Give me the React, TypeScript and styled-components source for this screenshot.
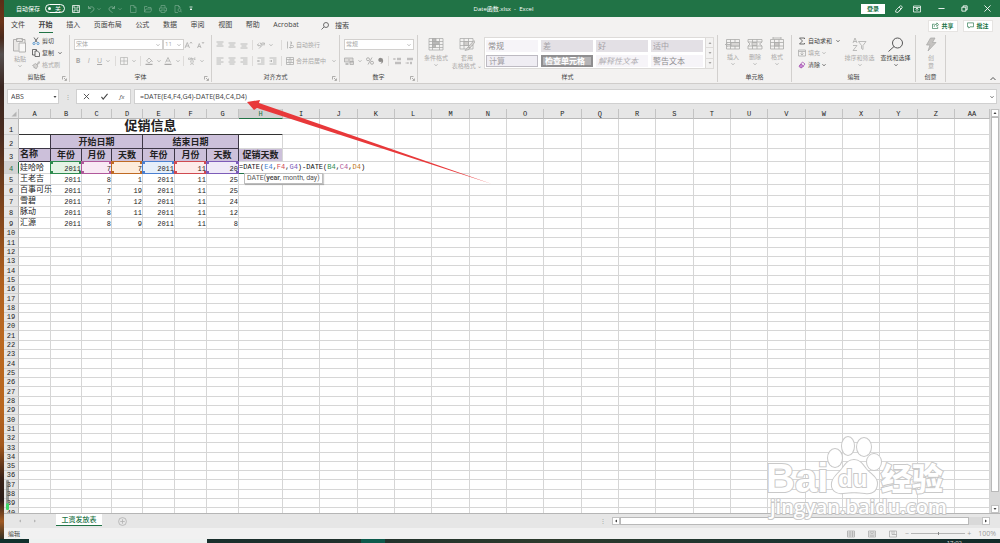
import React from "react";
import styled, { createGlobalStyle, css } from "styled-components";

const ui = `"Open Sans", "Noto Sans CJK SC", sans-serif`;
const mono = `"Liberation Mono", "Noto Sans CJK SC", monospace`;
const c = {
  green: "#217346",
  ribbon: "#f3f2f1",
  frame: "#e6e6e6",
  line: "#d6d6d6",
  text: "#444444",
  off: "#aaa9a8",
  violet: "#ccc0da",
};

const GlobalStyle = createGlobalStyle`
  *, *::before, *::after { box-sizing: border-box; }
  body { margin: 0; font-family: ${ui}; font-size: 6px; line-height: 8px; color: ${c.text}; background: #2b1a12; }
  button, input, select { font: inherit; color: inherit; margin: 0; padding: 0; border: 0; background: none; border-radius: 0; }
  button { display: inline-flex; align-items: center; justify-content: center; white-space: nowrap; }
  select { appearance: none; }
  svg { display: block; flex: none; }
`;

/* ---------- page frame ---------- */
const Desktop = styled.div`
  min-height: 100vh;
  display: flex;
  flex-direction: column;
  overflow: hidden;
  background: linear-gradient(#5b2f18 0, #6b3418 4%, #4a2a1c 7%, #55504f 10%, #3a2620 16%, #4a2c20 25%, #6d3c1c 33%, #8a4a1c 42%, #b0611f 52%, #bb6a22 62%, #b8661f 75%, #a3581d 82%, #3a2218 88%, #2c1c18 92%, #a05a24 96%, #1c2725 100%);
`;
const Win = styled.div`
  margin-left: 4px;
  flex: 1;
  display: flex;
  flex-direction: column;
  background: ${c.frame};
`;

/* ---------- title bar ---------- */
const TitleBar = styled.header`
  height: 17px;
  display: grid;
  grid-template-columns: 1fr auto 1fr;
  align-items: center;
  padding: 0 9px 0 12px;
  background: ${c.green};
  color: #fff;
`;
const DocTitle = styled.h1`
  margin: 0;
  font-size: 6px;
  font-weight: 400;
`;
const Quick = styled.div`
  display: flex;
  align-items: center;
  gap: 7px;
`;
const AutoSave = styled.label`
  display: flex;
  align-items: center;
  gap: 5px;
`;
const Toggle = styled.span`
  position: relative;
  display: flex;
  align-items: center;
  justify-content: flex-end;
  width: 20px;
  height: 9px;
  padding-right: 3px;
  border: 1px solid #fff;
  border-radius: 5px;
  input { position: absolute; inset: 0; width: 100%; height: 100%; opacity: 0; }
  &::before { content: ""; position: absolute; left: 2px; top: 2px; width: 3px; height: 3px; border-radius: 50%; background: #fff; }
`;
const QuickButton = styled.button<{ $dim?: boolean }>`
  gap: 2px;
  color: #fff;
  opacity: ${(p) => (p.$dim ? 0.35 : 1)};
`;
const WindowTools = styled.div`
  display: flex;
  justify-content: flex-end;
  align-items: center;
  gap: 17px;
`;
const ToolSet = styled.div<{ $gap: number }>`
  display: flex;
  align-items: center;
  gap: ${(p) => p.$gap}px;
  color: #fff;
`;
const Login = styled.button`
  width: 24px;
  height: 10px;
  background: #fff;
  color: ${c.green};
  font-weight: 600;
`;

/* ---------- ribbon tabs ---------- */
const TabRow = styled.nav`
  height: 17px;
  display: flex;
  align-items: center;
  padding: 0 7px;
  background: ${c.ribbon};
  font-size: 7px;
`;
const TabList = styled.div`
  width: 288px;
  display: flex;
  justify-content: space-between;
`;
const Tab = styled.button<{ $on?: boolean }>`
  height: 15px;
  border-bottom: 1px solid ${(p) => (p.$on ? c.green : "transparent")};
  font-weight: ${(p) => (p.$on ? 700 : 400)};
`;
const Search = styled.button`
  margin: 0 auto 0 22px;
  gap: 6px;
`;
const ShareButton = styled.button`
  width: 30px;
  height: 12px;
  margin-left: 5px;
  gap: 2px;
  background: #fff;
  border: 1px solid #e6e4e2;
  color: ${c.green};
  font-size: 6px;
  font-weight: 600;
`;

/* ---------- ribbon ---------- */
const Ribbon = styled.section`
  height: 50px;
  display: flex;
  padding: 1px 0 1px;
  background: ${c.ribbon};
  border-bottom: 1px solid #cfcdcb;
`;
const Group = styled.section<{ $w: number }>`
  position: relative;
  width: ${(p) => p.$w}px;
  display: flex;
  flex-direction: column;
  border-right: 1px solid #d2d0ce;
`;
const GroupBody = styled.div<{ $gap?: number; $pad?: number }>`
  flex: 1;
  display: flex;
  align-items: flex-start;
  gap: ${(p) => p.$gap ?? 4}px;
  padding-left: ${(p) => p.$pad ?? 4}px;
`;
const GroupLabel = styled.h2`
  margin: 0;
  height: 10px;
  text-align: center;
  font-size: 6px;
  line-height: 10px;
  font-weight: 400;
`;
const Launcher = styled.button`
  position: absolute;
  right: 2px;
  bottom: 1px;
  color: #8a8886;
`;
const BigButton = styled.button<{ $off?: boolean; $w?: number }>`
  flex-direction: column;
  justify-content: flex-start;
  width: ${(p) => p.$w ?? 22}px;
  padding-top: 2px;
  gap: 1px;
  line-height: 7px;
  color: ${(p) => (p.$off ? c.off : c.text)};
  svg + span { padding-top: 2px; }
`;
const SmallStack = styled.div`
  display: flex;
  flex-direction: column;
  align-items: flex-start;
`;
const SmallButton = styled.button<{ $off?: boolean }>`
  height: 12px;
  gap: 2px;
  color: ${(p) => (p.$off ? c.off : c.text)};
`;
const Rows = styled.div`
  display: flex;
  flex-direction: column;
  gap: 5px;
  padding-top: 4px;
`;
const Row = styled.div<{ $gap?: number }>`
  height: 11px;
  display: flex;
  align-items: center;
  gap: ${(p) => p.$gap ?? 4}px;
  color: ${c.off};
`;
const Rule = styled.span`
  width: 1px;
  height: 10px;
  background: #dddbd9;
`;
const Tool = styled.button<{ $w?: number }>`
  width: ${(p) => (p.$w ? `${p.$w}px` : "auto")};
  gap: 4px;
  justify-content: flex-start;
  font-size: 7px;
`;
const LabelTool = styled.button`
  gap: 2px;
  svg:last-child:not(:first-child) { margin-left: 4px; }
`;
const Picker = styled.span<{ $w: number }>`
  position: relative;
  width: ${(p) => p.$w}px;
  height: 11px;
  border: 1px solid #d2d0ce;
  background: #fff;
  select { display: block; width: 100%; height: 9px; padding-left: 1px; line-height: 9px; }
  svg { position: absolute; right: 2px; top: 3px; pointer-events: none; }
`;
const Gallery = styled.div`
  display: flex;
  height: 32px;
  margin-top: 2px;
  border: 1px solid #dddbd9;
  background: #fff;
`;
const Swatches = styled.div`
  display: grid;
  grid-template-columns: repeat(4, 52px);
  grid-auto-rows: 12px;
  gap: 3px;
  padding: 2px 2px 0 1px;
`;
const Swatch = styled.button<{ $kind: "plain" | "tint" | "calc" | "check" | "note" }>`
  justify-content: flex-start;
  padding-left: 2px;
  font-size: 8px;
  line-height: 10px;
  color: #8f8d90;
  background: #f6f4f8;
  ${(p) => p.$kind === "tint" && css`background: #e3e0e5; color: #a5a2a7;`}
  ${(p) => p.$kind === "calc" && css`background: #efedf3; border: 1px solid #bdbac2; color: #a5a2a7;`}
  ${(p) => p.$kind === "check" && css`background: #b5b4b6; border: 2px double #8f8e90; color: #fff; font-weight: 700;`}
  ${(p) => p.$kind === "note" && css`font-style: italic; color: #b0adb2;`}
`;
const GalleryNav = styled.div`
  display: flex;
  flex-direction: column;
  width: 8px;
  border-left: 1px solid #dddbd9;
  color: #a5a3a1;
  background: ${c.ribbon};
  button { flex: 1; }
  button + button { border-top: 1px solid #dddbd9; }
`;
const Collapse = styled.button`
  margin: auto 4px 1px auto;
`;

/* ---------- formula bar ---------- */
const FormulaBar = styled.div`
  height: 25px;
  display: flex;
  align-items: center;
  padding: 0 3px 0 3px;
`;
const NameBox = styled.label`
  width: 52px;
  height: 15px;
  display: flex;
  align-items: center;
  padding: 0 3px;
  background: #fff;
  border: 1px solid #d0d0d0;
  input { width: 42px; font-size: 7px; }
`;
const Grip = styled.span`
  width: 17px;
  text-align: center;
  color: #9a9a9a;
`;
const EditButtons = styled.div`
  width: 55px;
  height: 15px;
  display: flex;
  align-items: center;
  justify-content: space-around;
  background: #fff;
  border: 1px solid #d0d0d0;
`;
const FormulaField = styled.label`
  flex: 1;
  height: 15px;
  margin-left: 3px;
  display: flex;
  align-items: center;
  padding: 0 2px 0 5px;
  background: #fff;
  border: 1px solid #d0d0d0;
  input { flex: 1; font-size: 7px; }
`;

/* ---------- sheet ---------- */
const SheetArea = styled.main`
  position: relative;
  flex: 1 0 404px;
  height: 404px;
  display: flex;
`;
const SheetView = styled.div`
  flex: 1;
  height: 404px;
  overflow: hidden;
  background: #fff;
`;
const Grid = styled.table`
  width: 100%;
  height: 409px;
  table-layout: fixed;
  border-collapse: separate;
  border-spacing: 0;
  font-family: ${mono};
  font-size: 7px;
  line-height: 8px;
  color: #222;
  th, td { padding: 0; border: 0 solid ${c.line}; border-width: 0 1px 1px 0; }
`;
const ColHead = styled.th<{ $on?: boolean }>`
  height: 10px;
  background: ${(p) => (p.$on ? "#d2d2d2" : c.frame)};
  color: ${(p) => (p.$on ? c.green : "#222")};
  font-weight: 400;
  && { border-color: #c3c3c3; border-bottom-color: ${(p) => (p.$on ? c.green : "#b8b8b8")}; }
  svg { margin-left: auto; margin-right: 1px; }
`;
const RowHead = styled.th<{ $on?: boolean }>`
  background: ${(p) => (p.$on ? "#d2d2d2" : c.frame)};
  color: ${(p) => (p.$on ? c.green : "#222")};
  font-weight: 400;
  vertical-align: bottom;
  && { border-bottom-color: #cfcfcf; border-right-color: ${(p) => (p.$on ? c.green : "#b8b8b8")}; }
`;
const Line = styled.tr<{ $h?: number }>`
  ${(p) => p.$h && css`height: ${p.$h}px;`}
`;
const Caption = styled.td`
  text-align: center;
  font-size: 13px;
  line-height: 15px;
  font-weight: 700;
  && { border-bottom-color: #333; border-right-color: #fff; }
`;
const Head = styled.td<{ $left?: boolean; $open?: boolean; $blank?: boolean }>`
  background: ${(p) => (p.$blank ? "#fff" : c.violet)};
  text-align: ${(p) => (p.$left ? "left" : "center")};
  vertical-align: ${(p) => (p.$left ? "middle" : "bottom")};
  font-size: 9px;
  line-height: 10px;
  font-weight: 700;
  && { border-color: ${(p) => (p.$open ? c.line : "#3c3645")}; ${(p) => p.$left && "padding-left: 1px;"} }
`;
const Name = styled.td`
  font-size: 8px;
  line-height: 10px;
  white-space: nowrap;
  && { padding-left: 1px; }
`;
const Num = styled.td<{ $ref?: [string, string] }>`
  position: relative;
  text-align: right;
  vertical-align: bottom;
  ${(p) =>
    p.$ref &&
    css`
      background: ${p.$ref[1]};
      &::after {
        content: "";
        position: absolute;
        inset: -1px -1px -1px -1px;
        border: 1px solid ${p.$ref[0]};
        background:
          linear-gradient(${p.$ref[0]}, ${p.$ref[0]}) 0 0 / 2px 2px no-repeat,
          linear-gradient(${p.$ref[0]}, ${p.$ref[0]}) 100% 0 / 2px 2px no-repeat,
          linear-gradient(${p.$ref[0]}, ${p.$ref[0]}) 0 100% / 2px 2px no-repeat,
          linear-gradient(${p.$ref[0]}, ${p.$ref[0]}) 100% 100% / 2px 2px no-repeat;
      }
    `}
`;
const EditCell = styled.td`
  position: relative;
  && { border-bottom-color: ${c.green}; }
`;
const Editing = styled.div`
  position: absolute;
  left: 0;
  top: 0;
  z-index: 1;
  line-height: 11px;
  background: #fff;
  white-space: nowrap;
  color: #111;
`;
const Token = styled.span<{ $c: string }>`
  color: ${(p) => p.$c};
`;
const Hint = styled.div`
  position: absolute;
  left: 5px;
  top: 11px;
  z-index: 2;
  height: 11px;
  padding: 0 2px;
  border: 1px solid #bdbdbd;
  background: #fff;
  box-shadow: 1px 1px 1px #0003;
  font-family: Roboto, sans-serif;
  line-height: 9px;
  white-space: nowrap;
  color: #555;
`;
const Arrow = styled.svg`
  position: absolute;
  left: 242px;
  top: -10px;
  z-index: 3;
  pointer-events: none;
`;
const Gadget = styled.i`
  position: absolute;
  left: 2px;
  top: 371px;
  width: 3px;
  height: 30px;
  background: linear-gradient(#5558 0 23px, #3fd868 24px);
  border-radius: 1px;
`;
const Watermark = styled.svg`
  position: absolute;
  right: 51px;
  bottom: -10px;
  z-index: 3;
  pointer-events: none;
  overflow: visible;
  text, path, ellipse { paint-order: stroke; }
`;

/* ---------- scroll bars ---------- */
const VScroll = styled.div`
  width: 10px;
  display: flex;
  flex-direction: column;
  padding: 0 1px;
  background: #d9d9d9;
`;
const HScroll = styled.div`
  flex: 0 0 38%;
  height: 8px;
  display: flex;
  margin: 3px 10px 0 0;
  background: #d9d9d9;
`;
const ScrollButton = styled.button`
  width: 8px;
  height: 8px;
  background: #fff;
  border: 1px solid #c2c2c2;
`;
const Thumb = styled.div`
  flex: 1;
  background: #fff;
  border: 1px solid #b9b9b9;
`;
const Track = styled.div`
  flex: 0 0 13px;
`;

/* ---------- bottom ---------- */
const SheetTabs = styled.div`
  height: 15px;
  display: flex;
  border-top: 1px solid #b5b5b5;
`;
const SheetNav = styled.div`
  width: 52px;
  display: flex;
  gap: 11px;
  padding-left: 14px;
  color: #b5b5b5;
`;
const SheetTab = styled.button`
  width: 46px;
  height: 12px;
  background: #fff;
  border-bottom: 1px solid ${c.green};
  color: ${c.green};
  font-size: 7px;
  font-weight: 500;
`;
const AddSheet = styled.button`
  margin: 0 auto 0 16px;
  color: #b0b0b0;
`;
const TabGrip = styled(Grip)`
  align-self: center;
`;
const StatusBar = styled.footer`
  height: 11px;
  display: flex;
  align-items: center;
  padding: 0 4px;
  background: #f1f1f1;
`;
const ViewButtons = styled.div`
  margin-left: auto;
  display: flex;
  gap: 13px;
  color: #a8a8a8;
`;
const Zoom = styled.label`
  display: flex;
  align-items: center;
  gap: 2px;
  margin-left: 8px;
  color: #9b9b9b;
  font-size: 7px;
  input {
    appearance: none;
    width: 54px;
    height: 5px;
    background: linear-gradient(#b5b5b5, #b5b5b5) 0 2px / 100% 1px no-repeat;
  }
  input::-webkit-slider-thumb { appearance: none; width: 1px; height: 3px; background: #888; }
  output { margin-left: 5px; }
`;
const TaskBar = styled.div`
  height: 4px;
  display: flex;
  overflow: hidden;
  background: linear-gradient(90deg, #10302c 29px, #1d2f2c 30%, #2c3a2c 55%, #1a3330 80%, #122a28);
`;
const TaskItem = styled.i<{ $at: number; $w: number; $bg: string }>`
  margin-left: ${(p) => p.$at}px;
  width: ${(p) => p.$w}px;
  background: ${(p) => p.$bg};
`;
const Clock = styled.time`
  margin: 0 38px 0 auto;
  color: #ddd;
`;

/* ---------- icons ---------- */
type IconProps = { w?: number; h?: number; box?: string; sw?: number; children: React.ReactNode };
const Icon = ({ w = 8, h = 8, box = "0 0 16 16", sw = 1.5, children }: IconProps) => (
  <svg width={w} height={h} viewBox={box} fill="none" stroke="currentColor" strokeWidth={sw} aria-hidden="true">
    {children}
  </svg>
);
const Chev = () => (
  <Icon w={4} h={4} box="0 0 8 8" sw={1.6}><path d="M1 2.5l3 3 3-3" /></Icon>
);
const Tri = ({ dir }: { dir: "up" | "down" | "left" | "right" }) => {
  const d = { up: "M1 6h6L4 2z", down: "M1 2h6L4 6z", left: "M6 1v6L2 4z", right: "M2 1v6l4-3z" }[dir];
  return <Icon w={4} h={4} box="0 0 8 8"><path d={d} fill="currentColor" stroke="none" /></Icon>;
};
const Bars = ({ rows }: { rows: [number, number, number][] }) => (
  <Icon>{rows.map(([x, y, l], i) => <path key={i} d={`M${x} ${y}h${l}`} />)}</Icon>
);
const Indent = ({ flip }: { flip?: boolean }) => (
  <Icon>
    <path d="M1 2h14M8 6h7M8 10h7M1 14h14" />
    <path d={flip ? "M1 8h5M4 6l2 2-2 2" : "M6 8H1M3 6L1 8l2 2"} />
  </Icon>
);
const CellsIcon = ({ kind }: { kind: "insert" | "delete" | "format" }) => (
  <Icon w={16} h={14} box="0 0 32 28" sw={1.6}>
    {kind === "format" && <path d="M8 2h16M8 0v4M24 0v4" />}
    <path d={kind === "delete" ? "M2 5h28v5l-5 4 5 4v6H2v-6l4-4-4-4zM11 5v5M20 5v5M11 18v6M20 18v6M2 10h28M2 18h28" : "M3 5h26v19H3zM3 11h26M3 18h26M11 5v19M20 5v19"} />
    {kind === "insert" && <path d="M1 15h10M5 11l-4 4 4 4M12 11h17v7H12z" fill="#d8d6d4" />}
    {kind === "delete" && <path d="M10 11h10v6H10z" fill="#d8d6d4" />}
    {kind === "format" && <path d="M11 11h9v7h-9z" fill="#c8c6c4" />}
  </Icon>
);
const Corner = () => (
  <Icon w={5} h={5} box="0 0 10 10" sw={1.3}><path d="M1 7V1h6M4 4l4 4M9 5v4H5" /></Icon>
);

/* ---------- data ---------- */
const tabs = ["文件", "开始", "插入", "页面布局", "公式", "数据", "审阅", "视图", "帮助", "Acrobat"];
const letters = [..."ABCDEFGHIJKLMNOPQRSTUVWXYZ", "AA"];
const fixedCols = [15, 32, 31, 30, 31, 32, 32, 32, 44];
const people: [string, ...number[]][] = [
  ["娃哈哈", 2011, 7, 7, 2011, 11, 20],
  ["王老吉", 2011, 8, 1, 2011, 11, 25],
  ["百事可乐", 2011, 7, 19, 2011, 11, 25],
  ["雪碧", 2011, 7, 12, 2011, 11, 24],
  ["脉动", 2011, 8, 11, 2011, 11, 12],
  ["汇源", 2011, 8, 9, 2011, 11, 8],
];
const refs: [string, string][] = [
  ["#2e8b4f", "#e4f3e6"],
  ["#b0589b", "#f8e9f4"],
  ["#bf6a24", "#fdecdc"],
  ["#4a7fd0", "#e6effa"],
  ["#cf4a50", "#fdebea"],
  ["#7d5cb8", "#efeaf8"],
];
const swatches: [string, "plain" | "tint" | "calc" | "check" | "note"][] = [
  ["常规", "plain"], ["差", "tint"], ["好", "tint"], ["适中", "tint"],
  ["计算", "calc"], ["检查单元格", "check"], ["解释性文本", "note"], ["警告文本", "plain"],
];
const formula = "=DATE(E4,F4,G4)-DATE(B4,C4,D4)";
const tokenColor: Record<string, string> = { E4: "#4a7fd0", F4: "#cf4a50", G4: "#7d5cb8", B4: "#2e8b4f", C4: "#b0589b", D4: "#bf7a24" };
const Blanks = ({ n }: { n: number }) => <>{Array.from({ length: n }, (_, i) => <td key={i} />)}</>;

function Header() {
  return (
    <TitleBar>
      <Quick>
        <AutoSave>自动保存<Toggle><input type="checkbox" aria-label="自动保存" />关</Toggle></AutoSave>
        <QuickButton aria-label="保存"><Icon><path d="M1 1h14v14H1zM4 1v5h8V1M4 15v-5h8v5" /></Icon></QuickButton>
        <QuickButton $dim aria-label="撤消"><Icon sw={2}><path d="M3 2v5h5M3 7c3-5 11-4 11 1 0 3-4 5-7 7" /></Icon><Chev /></QuickButton>
        <QuickButton $dim aria-label="恢复"><Icon sw={2}><path d="M13 2v5H8M13 7C10 2 2 3 2 8c0 3 4 5 7 7" /></Icon><Chev /></QuickButton>
        <QuickButton $dim aria-label="新建"><Icon><path d="M3 1h7l4 4v10H3zM10 1v4h4" /></Icon></QuickButton>
        <QuickButton $dim aria-label="打开"><Icon><path d="M1 14V3h5l2 2h6v3M1 14l3-6h12l-3 6z" /></Icon></QuickButton>
        <QuickButton $dim aria-label="打印"><Icon><path d="M4 6V1h8v5M4 12H1V6h14v6h-3M4 10h8v5H4z" /></Icon></QuickButton>
        <QuickButton $dim aria-label="打印预览"><Icon><path d="M12 6V4L9 1H2v14h6M9 1v3h3" /><circle cx="11" cy="10" r="3" /><path d="M13 12l3 3" /></Icon></QuickButton>
        <QuickButton aria-label="自定义"><Icon w={4} h={6} box="0 0 8 12"><path d="M1 2h6M2 6l2 2 2-2z" fill="currentColor" /></Icon></QuickButton>
      </Quick>
      <DocTitle>Date函数.xlsx&nbsp; -&nbsp; Excel</DocTitle>
      <WindowTools>
        <ToolSet $gap={10}>
          <Login>登录</Login>
          <QuickButton aria-label="墨迹"><Icon><path d="M2 10l8-8c2-2 6 2 4 4l-7 7M2 10l-1 4 5 1 7-8M8 4l4 4" /></Icon></QuickButton>
          <QuickButton aria-label="功能区显示选项"><Icon><path d="M1 2h14v12H1zM1 5h14M8 12V7M5 9l3-3 3 3" /></Icon></QuickButton>
        </ToolSet>
        <ToolSet $gap={16}>
          <QuickButton aria-label="最小化"><Icon w={7} h={7} sw={2}><path d="M1 8h14" /></Icon></QuickButton>
          <QuickButton aria-label="还原"><Icon w={7} h={7} sw={2}><path d="M2 5h9v9H2zM5 5V2h9v9h-3" /></Icon></QuickButton>
          <QuickButton aria-label="关闭"><Icon w={7} h={7} sw={2}><path d="M1 1l14 14M15 1L1 15" /></Icon></QuickButton>
        </ToolSet>
      </WindowTools>
    </TitleBar>
  );
}

function RibbonPanel() {
  return (
    <Ribbon>
      <Group $w={66}>
        <GroupBody $gap={1} $pad={5}>
          <BigButton $off>
            <Icon w={16} h={16} box="0 0 32 32" sw={1.8}>
              <path d="M11 5H3v23h10M19 5h7v7M9 3h12v6H9z" fill="#e9e7e5" /><path d="M14 12h13v18H14z" fill="#f8f7f6" />
            </Icon>
            <span>粘贴</span><Chev />
          </BigButton>
          <SmallStack>
            <SmallButton><Icon><path d="M4 1l6 9M12 1L6 10" /><g stroke="#3a86c8"><circle cx="4" cy="13" r="2.2" /><circle cx="12" cy="13" r="2.2" /></g></Icon>剪切</SmallButton>
            <SmallButton><Icon><path d="M6 12H1V1h8v3" /><path d="M6 4h5l4 4v7H6z" /></Icon>复制&nbsp;<Chev /></SmallButton>
            <SmallButton $off><Icon><path d="M9 7l5-6 2 2-6 5M1 9l6-4 5 5-4 6-2-3-2 1 0-3z" fill="#d5d3d1" /></Icon>格式刷</SmallButton>
          </SmallStack>
        </GroupBody>
        <GroupLabel>剪贴板</GroupLabel><Launcher aria-label="剪贴板设置"><Corner /></Launcher>
      </Group>

      <Group $w={142}>
        <GroupBody>
          <Rows>
            <Row $gap={0}>
              <Picker $w={89}><select aria-label="字体"><option>宋体</option></select><Chev /></Picker>
              <Picker $w={21}><select aria-label="字号"><option>11</option></select><Chev /></Picker>
              <Row $gap={4}>
                <Tool aria-label="增大字号" $w={8}><Icon w={9} h={8} box="0 0 18 16"><path d="M2 14L6.500 3 11 14M3.500 10h6M12 5l2-3 2 3" /></Icon></Tool>
                <Tool aria-label="减小字号" $w={8}><Icon w={9} h={8} box="0 0 18 16"><path d="M3 14L6.500 5 10 14M4 11h5M12 2l2 3 2-3" /></Icon></Tool>
              </Row>
            </Row>
            <Row>
              <Tool $w={8}><b>&nbsp;B</b></Tool>
              <Tool $w={7}><i>&nbsp;I</i></Tool>
              <Tool $w={14}><u>U</u><Chev /></Tool>
              <Rule />
              <Tool aria-label="边框"><Icon sw={1.2}><path d="M1 1h14v14H1zM8 1v14M1 8h14" /></Icon><Chev /></Tool>
              <Rule />
              <Tool aria-label="填充颜色" $w={15}><Icon><path d="M3 8l5-6 5 5-5 5zM13 7l2 3" /><path d="M1 15h14" strokeWidth="3" /></Icon><Chev /></Tool>
              <Tool aria-label="字体颜色" $w={15}><Icon><path d="M3 11L8 1l5 10M5 8h6" /><path d="M1 15h14" strokeWidth="3" /></Icon><Chev /></Tool>
              <Rule />
              <Tool aria-label="拼音"><Icon sw={1.2}><path d="M1 2h4v3H1zM7 1v4h3V3H7M15 2h-3v3h3M4 8h8M8 7v1M5 9c1 3 4 5 7 6M11 9c-1 3-4 5-7 6" /></Icon><Chev /></Tool>
            </Row>
          </Rows>
        </GroupBody>
        <GroupLabel>字体</GroupLabel><Launcher aria-label="字体设置"><Corner /></Launcher>
      </Group>

      <Group $w={128}>
        <GroupBody>
          <Rows>
            <Row>
              <Tool aria-label="顶端对齐"><Bars rows={[[1, 2, 14], [3, 6, 10], [1, 10, 14]]} /></Tool>
              <Tool aria-label="垂直居中"><Bars rows={[[1, 4, 14], [3, 8, 10], [1, 12, 14]]} /></Tool>
              <Tool aria-label="底端对齐"><Bars rows={[[1, 6, 14], [3, 10, 10], [1, 14, 14]]} /></Tool>
              <Rule />
              <Tool aria-label="方向" $w={20}><Icon><path d="M4 15L14 5M10 4l5 0-1 5" /><path d="M1 8l7 2M3 5c-2 1-2 4 0 5M6 3l3 5c2-1 1-4-1-3" /></Icon><Chev /></Tool>
              <Rule />
              <LabelTool><Icon><path d="M3 1v14M8 2h3v4H8M8 9h5c3 0 3 4 0 4H7M9 11l-2 2 2 2" /></Icon>自动换行</LabelTool>
            </Row>
            <Row>
              <Tool aria-label="左对齐"><Bars rows={[[1, 2, 14], [1, 6, 9], [1, 10, 14], [1, 14, 9]]} /></Tool>
              <Tool aria-label="居中"><Bars rows={[[1, 2, 14], [3, 6, 10], [1, 10, 14], [3, 14, 10]]} /></Tool>
              <Tool aria-label="右对齐"><Bars rows={[[1, 2, 14], [6, 6, 9], [1, 10, 14], [6, 14, 9]]} /></Tool>
              <Rule />
              <Tool aria-label="减少缩进"><Indent /></Tool>
              <Tool aria-label="增加缩进"><Indent flip /></Tool>
              <Rule />
              <LabelTool><Icon><path d="M1 1h14v14H1zM1 5h14M1 11h14M8 1v4M8 11v4M4 8h8" /></Icon>合并后居中<Chev /></LabelTool>
            </Row>
          </Rows>
        </GroupBody>
        <GroupLabel>对齐方式</GroupLabel><Launcher aria-label="对齐设置"><Corner /></Launcher>
      </Group>

      <Group $w={78}>
        <GroupBody>
          <Rows>
            <Row><Picker $w={70}><select aria-label="数字格式"><option>常规</option></select><Chev /></Picker></Row>
            <Row $gap={4}>
              <Tool aria-label="货币" $w={18}><Icon w={10} box="0 0 20 16"><path d="M1 2h17v8H1zM10 4v4M3 13h6M3 15h6M12 9h7v6h-7z" fill="#dddbd9" /></Icon><Chev /></Tool>
              <Tool aria-label="百分比"><Icon sw={1.8}><circle cx="4" cy="4.500" r="3" /><circle cx="12" cy="11.500" r="3" /><path d="M12 1L4 15" /></Icon></Tool>
              <Tool aria-label="千位分隔"><Icon w={6} h={8} box="0 0 12 16"><path d="M6 2a4 4 0 1 0 1 7c0 2-1 4-3 5 5-1 7-4 6-8a4 4 0 0 0-4-4z" fill="#8f8d8b" stroke="none" /></Icon></Tool>
              <Rule />
              <Tool aria-label="增加小数位"><Icon sw={1.3}><path d="M1 4h5M3 2L1 4l2 2M9 2h2v4H9zM13 2h2v4h-2zM5 10h2v4H5zM9 10h2v4H9zM13 10h2v4h-2z" /></Icon></Tool>
              <Tool aria-label="减少小数位"><Icon sw={1.3}><path d="M5 2h2v4H5zM9 2h2v4H9zM13 2h2v4h-2zM1 12h6M5 10l2 2-2 2M11 10h2v4h-2z" /></Icon></Tool>
            </Row>
          </Rows>
        </GroupBody>
        <GroupLabel>数字</GroupLabel><Launcher aria-label="数字设置"><Corner /></Launcher>
      </Group>

      <Group $w={300}>
        <GroupBody $gap={3}>
          <BigButton $off $w={28}>
            <Icon w={16} h={15} box="0 0 32 30"><path d="M2 3h28v23H2zM2 9h28M2 15h28M2 21h28M9 3v23M23 3v23" /><path d="M9 3h7v6H9zM9 9h12v6H9zM9 15h6v6H9z" fill="#b9b8b7" /></Icon>
            <span>条件格式</span><Chev />
          </BigButton>
          <BigButton $off $w={28}>
            <Icon w={16} h={15} box="0 0 32 30"><path d="M2 3h26v21H2zM2 9h26M2 17h26M10 3v21M19 3v21" /><path d="M10 9h9v8h-9z" fill="#cfcdcb" /><path d="M30 7L19 19l3 3L32 10zM18 20l-6 7 8-2 2-3z" fill="#d8d6d4" /></Icon>
            <span>套用</span><span>表格格式 ⌄</span>
          </BigButton>
          <Gallery>
            <Swatches>{swatches.map(([t, k]) => <Swatch key={t} $kind={k}>{t}</Swatch>)}</Swatches>
            <GalleryNav>
              <button aria-label="上一行"><Tri dir="up" /></button>
              <button aria-label="下一行"><Tri dir="down" /></button>
              <button aria-label="其他样式"><Tri dir="down" /></button>
            </GalleryNav>
          </Gallery>
        </GroupBody>
        <GroupLabel>样式</GroupLabel>
      </Group>

      <Group $w={74}>
        <GroupBody $gap={0}>
          <BigButton $off><CellsIcon kind="insert" /><span>插入</span><Chev /></BigButton>
          <BigButton $off><CellsIcon kind="delete" /><span>删除</span><Chev /></BigButton>
          <BigButton $off><CellsIcon kind="format" /><span>格式</span><Chev /></BigButton>
        </GroupBody>
        <GroupLabel>单元格</GroupLabel>
      </Group>

      <Group $w={124}>
        <GroupBody $gap={4} $pad={6}>
          <SmallStack>
            <SmallButton><Icon><path d="M13 4V2H3l6 6-6 6h10v-2" /></Icon>自动求和&nbsp;<Chev /></SmallButton>
            <SmallButton $off><Icon><path d="M1 2h14v12H1zM1 5h14M8 6v6M5 9l3 3 3-3" /></Icon>填充<Chev /></SmallButton>
            <SmallButton><Icon><path d="M9 2l5 4-6 7-5-4z" stroke="#a04cae" /><path d="M6 6l5 4-3 3-2 1-4-3z" fill="#c98ad2" stroke="#a04cae" /></Icon>清除<Chev /></SmallButton>
          </SmallStack>
          <BigButton $off $w={32}>
            <Icon w={15} h={15} box="0 0 30 30"><path d="M2 12L6 2l4 10M3 9h6M2 17h8L2 27h8M13 9h15l-6 8v8l-3-2v-6z" /></Icon>
            <span>排序和筛选</span><Chev />
          </BigButton>
          <BigButton $w={32}>
            <Icon w={17} h={15} box="0 0 34 30" sw={1.8}><circle cx="21" cy="12" r="10" /><path d="M14 19L3 29" /></Icon>
            <span>查找和选择</span><Chev />
          </BigButton>
        </GroupBody>
        <GroupLabel>编辑</GroupLabel>
      </Group>

      <Group $w={30}>
        <GroupBody>
          <BigButton $off>
            <Icon w={12} h={15} box="0 0 24 30"><path d="M11 2h9l-5 9h7L6 28l4-12H3z" fill="#c4c2c0" /></Icon>
            <span>创</span><span>意</span>
          </BigButton>
        </GroupBody>
        <GroupLabel>创意</GroupLabel>
      </Group>
      <Collapse aria-label="折叠功能区"><Icon w={6} h={5} box="0 0 12 10" sw={1.8}><path d="M1 8l5-5 5 5" /></Icon></Collapse>
    </Ribbon>
  );
}

function Sheet() {
  return (
    <Grid>
      <colgroup>
        {fixedCols.map((w, i) => <col key={i} style={{ width: w }} />)}
        {Array.from({ length: 18 }, (_, i) => <col key={i} />)}
        <col style={{ width: 35 }} />
      </colgroup>
      <thead>
        <tr>
          <ColHead aria-label="全选"><Icon w={6} h={6} box="0 0 12 12"><path d="M11 1v10H1z" fill="#b5b5b5" stroke="none" /></Icon></ColHead>
          {letters.map((l) => <ColHead key={l} scope="col" $on={l === "H"}>{l}</ColHead>)}
        </tr>
      </thead>
      <tbody>
        <Line $h={16}><RowHead>1</RowHead><Caption colSpan={8}>促销信息</Caption><Blanks n={19} /></Line>
        <Line $h={14}>
          <RowHead>2</RowHead><Head $blank /><Head colSpan={3}>开始日期</Head><Head colSpan={3}>结束日期</Head><Blanks n={20} />
        </Line>
        <Line $h={13}>
          <RowHead>3</RowHead><Head $left>名称</Head>
          {["年份", "月份", "天数", "年份", "月份", "天数"].map((t, i) => <Head key={i}>{t}</Head>)}
          <Head $open>促销天数</Head><Blanks n={19} />
        </Line>
        {people.map(([name, ...nums], r) => (
          <Line key={name} $h={r ? 11 : 12}>
            <RowHead $on={r === 0}>{r + 4}</RowHead>
            <Name>{name}</Name>
            {nums.map((n, i) => <Num key={i} $ref={r === 0 ? refs[i] : undefined}>{n}</Num>)}
            {r === 0 ? (
              <EditCell>
                <Editing>{formula.split(/([A-G]4)/).map((t, i) => (tokenColor[t] ? <Token key={i} $c={tokenColor[t]}>{t}</Token> : t))}</Editing>
                <Hint role="tooltip">DATE(<b>year</b>, month, day)</Hint>
              </EditCell>
            ) : <td />}
            <Blanks n={19} />
          </Line>
        ))}
        {Array.from({ length: 31 }, (_, i) => <Line key={i}><RowHead>{i + 10}</RowHead><Blanks n={27} /></Line>)}
      </tbody>
    </Grid>
  );
}

export default function App() {
  return (
    <Desktop>
      <GlobalStyle />
      <Win>
        <Header />
        <TabRow>
          <TabList>{tabs.map((t) => <Tab key={t} $on={t === "开始"}>{t}</Tab>)}</TabList>
          <Search><Icon><circle cx="10" cy="6" r="5" /><path d="M6 10l-5 5" /></Icon>搜索</Search>
          <ShareButton><Icon w={7} h={7}><path d="M6 5H1v10h12v-4M5 11c0-5 3-6 6-6V2l4 4-4 4V7" /></Icon>共享</ShareButton>
          <ShareButton><Icon w={7} h={7}><path d="M1 2h14v9H7l-3 3v-3H1z" /></Icon>批注</ShareButton>
        </TabRow>
        <RibbonPanel />
        <FormulaBar>
          <NameBox><input aria-label="名称框" defaultValue="ABS" /><Tri dir="down" /></NameBox>
          <Grip>⋮</Grip>
          <EditButtons>
            <button aria-label="取消"><Icon w={7} h={7} sw={2}><path d="M2 2l12 12M14 2L2 14" /></Icon></button>
            <button aria-label="输入"><Icon w={7} h={7} sw={2.4}><path d="M1 9l4 5L15 2" /></Icon></button>
            <button aria-label="插入函数"><i>fx</i></button>
          </EditButtons>
          <FormulaField><input aria-label="编辑栏" defaultValue={formula} /><Chev /></FormulaField>
        </FormulaBar>
        <SheetArea>
          <SheetView><Sheet /></SheetView>
          <VScroll>
            <ScrollButton aria-label="向上"><Tri dir="up" /></ScrollButton>
            <Thumb />
            <Track />
            <ScrollButton aria-label="向下"><Tri dir="down" /></ScrollButton>
          </VScroll>
          <Gadget />
          <Arrow width="250" height="90" viewBox="0 0 250 90" aria-hidden="true">
            <path d="M1 3l13-2-1 3 233 81L11 9l-3 2z" fill="#e8383a" />
          </Arrow>
          <Watermark width="182" height="90" viewBox="0 0 182 90" fill="#fff" stroke="#c9c9c9" strokeWidth="2" aria-hidden="true">
            <text x="-1" y="59" fontFamily="Liberation Sans" fontWeight="700" fontSize="40">Bai</text>
            <ellipse cx="68" cy="25" rx="7" ry="9" />
            <ellipse cx="81" cy="13" rx="6" ry="9" />
            <ellipse cx="97" cy="14" rx="7" ry="9" />
            <ellipse cx="107" cy="29" rx="7" ry="8" />
            <path d="M87 27c6 0 9 5 12 9 4 5 11 8 11 14 0 8-5 11-12 10-8-1-14-1-22 0-8 1-12-4-11-10 1-6 6-9 10-14 3-4 6-9 12-9z" />
            <text x="71" y="54" fontFamily="Liberation Sans" fontWeight="700" fontSize="24">du</text>
            <text x="114" y="57" fontFamily="Noto Sans CJK SC" fontWeight="900" fontSize="31">经验</text>
            <text x="3" y="81" fontFamily="Open Sans" fontWeight="600" fontSize="20">jingyan.baidu.com</text>
          </Watermark>
        </SheetArea>
        <SheetTabs>
          <SheetNav>
            <button aria-label="上一张"><Tri dir="left" /></button>
            <button aria-label="下一张"><Tri dir="right" /></button>
          </SheetNav>
          <SheetTab>工资发放表</SheetTab>
          <AddSheet aria-label="新工作表"><Icon w={9} h={9} sw={1.4}><circle cx="8" cy="8" r="7" /><path d="M8 4v8M4 8h8" /></Icon></AddSheet>
          <TabGrip>⋮</TabGrip>
          <HScroll>
            <ScrollButton aria-label="向左"><Tri dir="left" /></ScrollButton>
            <Thumb />
            <Track />
            <ScrollButton aria-label="向右"><Tri dir="right" /></ScrollButton>
          </HScroll>
        </SheetTabs>
        <StatusBar>
          编辑
          <ViewButtons>
            <button aria-label="普通"><Icon><path d="M1 2h14v12H1zM1 6h14M1 10h14M6 2v12M11 2v12" /></Icon></button>
            <button aria-label="页面布局"><Icon><path d="M1 2h14v12H1zM4 4h8v8H4zM6 7h4M6 10h4" /></Icon></button>
            <button aria-label="分页预览"><Icon><path d="M1 2h14v12H1zM6 2v7h4V2M10 9h5" /></Icon></button>
          </ViewButtons>
          <Zoom>−<input type="range" min={0} max={100} defaultValue={50} aria-label="缩放" />+<output>100%</output></Zoom>
        </StatusBar>
      </Win>
      <TaskBar>
        <TaskItem $at={29} $w={178} $bg="#eef1f0" />
        <TaskItem $at={154} $w={24} $bg="#0d5a4c" />
        <Clock>17:02</Clock>
      </TaskBar>
    </Desktop>
  );
}
